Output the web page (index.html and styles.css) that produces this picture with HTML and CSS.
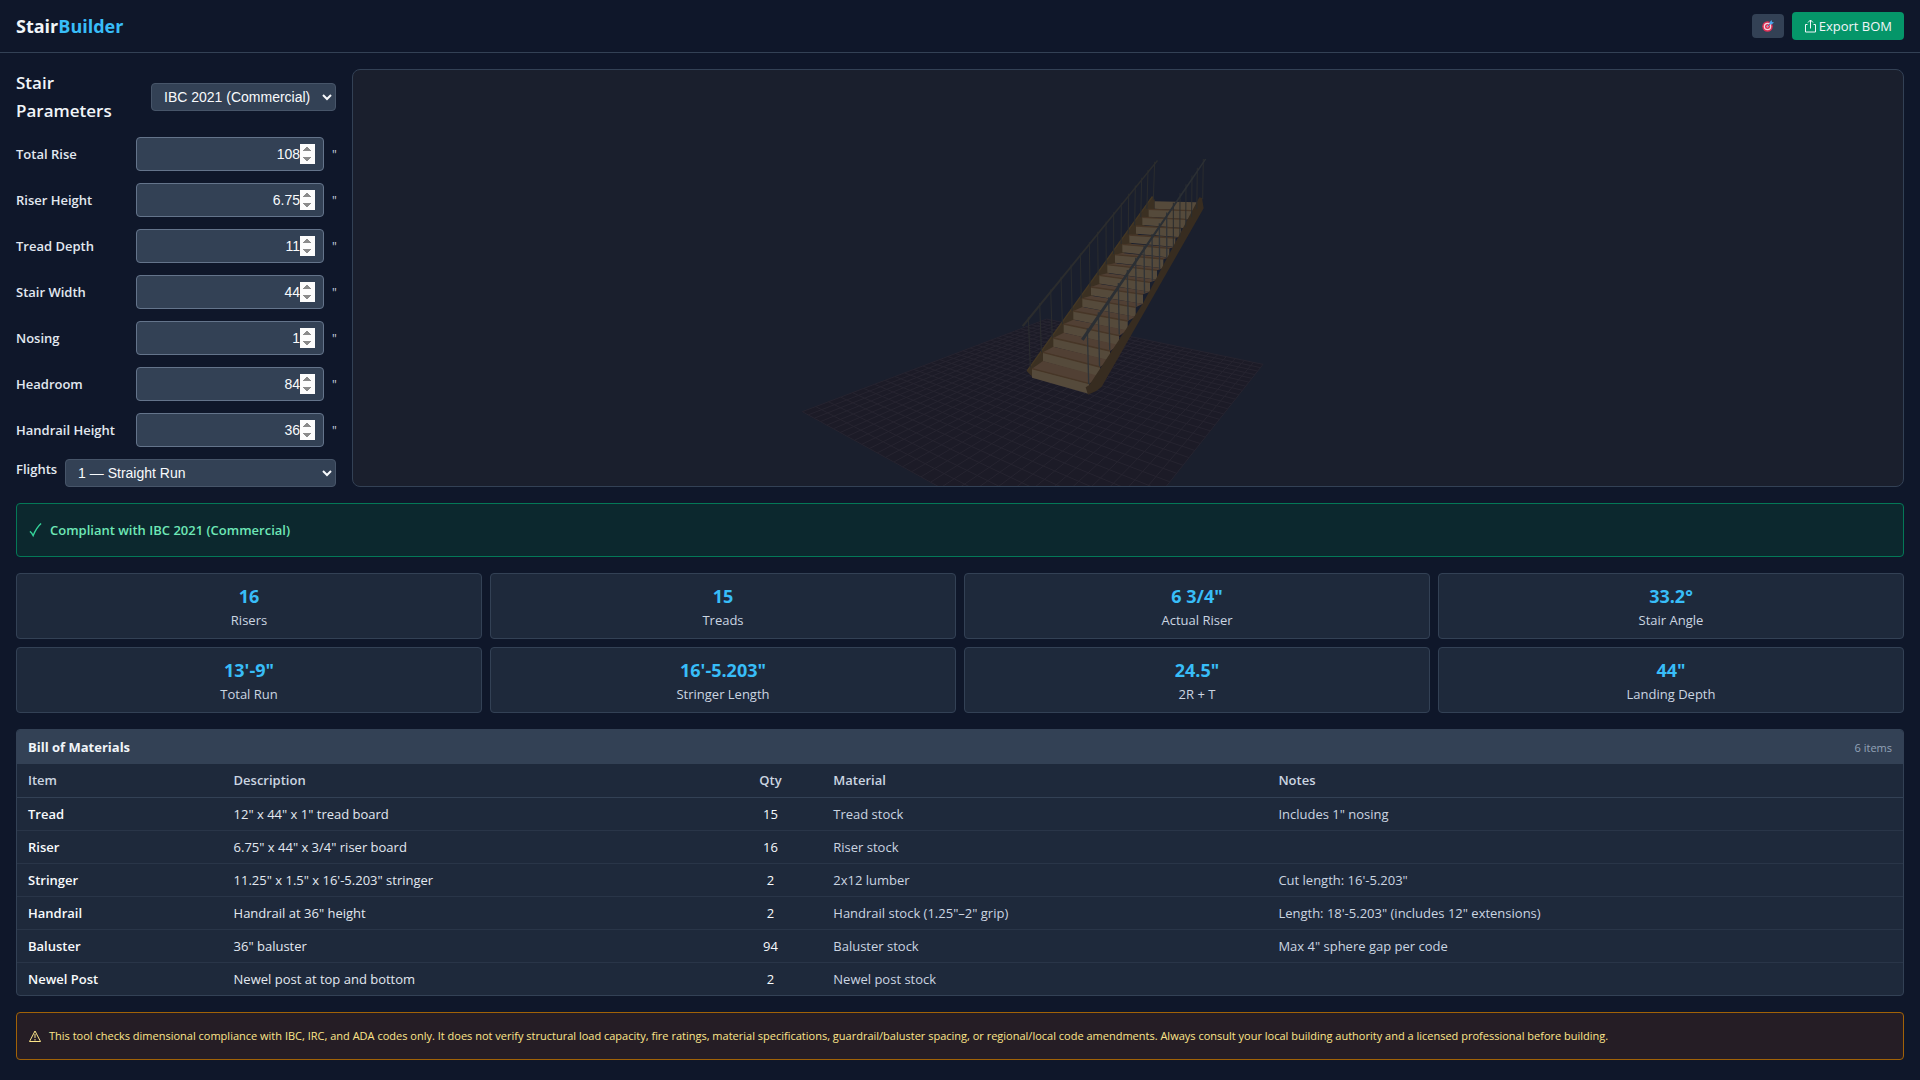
FILE: index.html
```html
<!DOCTYPE html>
<html lang="en">
<head>
  <meta charset="UTF-8" />
  <meta name="viewport" content="width=device-width, initial-scale=1.0" />
  <title>StairBuilder</title>
  <link rel="stylesheet" href="styles.css">
</head>
<body>

  <!-- Header -->
  <header class="header">
    <h1 class="logo">Stair<span>Builder</span></h1>
    <div class="actions">
      <button class="btn-view" type="button" aria-label="Reset view">
        <svg width="12" height="12" viewBox="0 0 24 24">
          <circle cx="11" cy="13" r="10.5" fill="#dd2e54"/>
          <circle cx="11" cy="13" r="7.5" fill="#f3d5de"/>
          <circle cx="11" cy="13" r="5" fill="#dd2e54"/>
          <circle cx="11" cy="13" r="2" fill="#f3d5de"/>
          <path d="M11 13L18 6" stroke="#2b7bbd" stroke-width="2"/>
          <path d="M15 9V5l4-5 1 4 4 1-5 4z" fill="#4aa8ee"/>
        </svg>
      </button>
      <button class="btn-export" type="button">
        <svg width="13" height="14" viewBox="0 0 13 14" fill="none" stroke="currentColor">
          <path d="M3.500 5.500h-2v7.500h10V5.500h-2M6.500 9.500V1M4 3.500L6.500 1 9 3.500"/>
        </svg>Export BOM</button>
    </div>
  </header>

  <main class="main">
    <div class="workspace">

      <!-- Parameters -->
      <form class="params">
        <div class="params-head">
          <h2>Stair Parameters</h2>
          <select aria-label="Building code">
            <option>IBC 2021 (Commercial)</option>
            <option>IRC 2021 (Residential)</option>
            <option>ADA</option>
          </select>
        </div>
        <div class="field">
          <label for="rise">Total Rise</label>
          <input id="rise" type="number" value="108">
          <span class="unit">"</span>
        </div>
        <div class="field">
          <label for="riser">Riser Height</label>
          <input id="riser" type="number" step="0.25" value="6.75">
          <span class="unit">"</span>
        </div>
        <div class="field">
          <label for="tread">Tread Depth</label>
          <input id="tread" type="number" value="11">
          <span class="unit">"</span>
        </div>
        <div class="field">
          <label for="width">Stair Width</label>
          <input id="width" type="number" value="44">
          <span class="unit">"</span>
        </div>
        <div class="field">
          <label for="nosing">Nosing</label>
          <input id="nosing" type="number" value="1">
          <span class="unit">"</span>
        </div>
        <div class="field">
          <label for="headroom">Headroom</label>
          <input id="headroom" type="number" value="84">
          <span class="unit">"</span>
        </div>
        <div class="field">
          <label for="handrail">Handrail Height</label>
          <input id="handrail" type="number" value="36">
          <span class="unit">"</span>
        </div>
        <div class="flights">
          <label for="flights">Flights</label>
          <select id="flights">
            <option>1 — Straight Run</option>
            <option>2 — L-Shape</option>
          </select>
        </div>
      </form>

      <!-- 3D view -->
      <div class="viewer">
        <svg id="scene" viewBox="-1281 -210 4650 1248" role="img" aria-label="Stair preview"></svg>
      </div>
    </div>

    <div class="compliance">
      <svg width="13" height="16" viewBox="0 0 14 16" fill="none" stroke="#34d399" stroke-width="1.500">
        <path d="M1 9.500c1.500 1 2.500 2.500 3.500 4.500C6.500 9 9 4.500 13 1"/>
      </svg>
      <strong>Compliant with IBC 2021 (Commercial)</strong>
    </div>

    <!-- Results -->
    <div class="stats">
      <div class="stat"><b>16</b><span>Risers</span></div>
      <div class="stat"><b>15</b><span>Treads</span></div>
      <div class="stat"><b>6 3/4"</b><span>Actual Riser</span></div>
      <div class="stat"><b>33.2°</b><span>Stair Angle</span></div>
      <div class="stat"><b>13'-9"</b><span>Total Run</span></div>
      <div class="stat"><b>16'-5.203"</b><span>Stringer Length</span></div>
      <div class="stat"><b>24.5"</b><span>2R + T</span></div>
      <div class="stat"><b>44"</b><span>Landing Depth</span></div>
    </div>

    <!-- Bill of Materials -->
    <section class="bom">
      <div class="bom-head">
        <h3>Bill of Materials</h3>
        <span>6 items</span>
      </div>
      <table>
        <thead>
          <tr>
            <th class="col-item">Item</th>
            <th class="col-desc">Description</th>
            <th class="col-qty">Qty</th>
            <th class="col-material">Material</th>
            <th>Notes</th>
          </tr>
        </thead>
        <tbody>
          <tr><td>Tread</td><td>12" x 44" x 1" tread board</td><td>15</td><td>Tread stock</td><td>Includes 1" nosing</td></tr>
          <tr><td>Riser</td><td>6.75" x 44" x 3/4" riser board</td><td>16</td><td>Riser stock</td><td></td></tr>
          <tr><td>Stringer</td><td>11.25" x 1.5" x 16'-5.203" stringer</td><td>2</td><td>2x12 lumber</td><td>Cut length: 16'-5.203"</td></tr>
          <tr><td>Handrail</td><td>Handrail at 36" height</td><td>2</td><td>Handrail stock (1.25"–2" grip)</td><td>Length: 18'-5.203" (includes 12" extensions)</td></tr>
          <tr><td>Baluster</td><td>36" baluster</td><td>94</td><td>Baluster stock</td><td>Max 4" sphere gap per code</td></tr>
          <tr><td>Newel Post</td><td>Newel post at top and bottom</td><td>2</td><td>Newel post stock</td><td></td></tr>
        </tbody>
      </table>
    </section>

    <div class="disclaimer">
      <svg width="12" height="12" viewBox="0 0 12 12" fill="none" stroke="currentColor">
        <path d="M6 1L11.500 11.500H.5zM6 4v4M6 9v1.500"/>
      </svg>
      <p>This tool checks dimensional compliance with IBC, IRC, and ADA codes only. It does not verify structural load capacity, fire ratings, material specifications, guardrail/baluster spacing, or regional/local code amendments. Always consult your local building authority and a licensed professional before building.</p>
    </div>
  </main>

  <script src="scene.js"></script>
</body>
</html>
```
FILE: styles.css
```css
* {
  box-sizing: border-box;
}
body {
  margin: 0;
  background-color: #0f172a;
  color: #f1f5f9;
  font-family: 'Segoe UI', 'Open Sans', sans-serif;
  font-size: 13px;
}
h1, h2, h3, p {
  margin: 0;
}

/* Header */
.header {
  display: flex;
  justify-content: space-between;
  align-items: center;
  padding: 12px 16px;
  border-bottom: 1px solid #334155;
}
.logo {
  font-size: 18px;
  line-height: 28px;
  font-weight: 700;
}
.logo span {
  color: #38bdf8;
}
.actions {
  display: flex;
  align-items: center;
  gap: 8px;
}
.actions button {
  display: flex;
  align-items: center;
  justify-content: center;
  border: none;
  border-radius: 4px;
  cursor: pointer;
}
.btn-view {
  width: 32px;
  height: 24px;
  padding: 0;
  background-color: #334155;
}
.btn-export {
  height: 28px;
  padding: 0 12px;
  gap: 2px;
  background-color: #059669;
  color: #f1f5f9;
  font-family: inherit;
  font-size: 13px;
  font-weight: 500;
}

.main {
  display: flex;
  flex-direction: column;
  gap: 16px;
  padding: 16px;
}
.workspace {
  display: grid;
  grid-template-columns: 320px 1fr;
  gap: 16px;
}

/* Parameters */
.params {
  display: flex;
  flex-direction: column;
  gap: 12px;
}
.params-head {
  display: flex;
  justify-content: space-between;
  align-items: center;
  gap: 12px;
}
.params-head h2 {
  font-size: 17px;
  line-height: 28px;
  font-weight: 600;
}
.params label {
  color: #e2e8f0;
  font-weight: 600;
}
.field {
  display: flex;
  align-items: center;
  gap: 8px;
}
.field label {
  width: 112px;
}
.field input {
  flex: 1;
  min-width: 0;
  height: 34px;
  padding: 6px 8px;
  border: 1px solid #64748b;
  border-radius: 4px;
  background-color: #334155;
  color: #f8fafc;
  font: 14px 'Liberation Sans', sans-serif;
  text-align: right;
}
.field input::-webkit-inner-spin-button {
  opacity: 1;
  height: 20px;
}
.unit {
  width: 4px;
  color: #cbd5e1;
  font-size: 12px;
}
select {
  height: 28px;
  padding: 0 8px;
  border: 1px solid #475569;
  border-radius: 4px;
  background-color: #334155;
  color: #f8fafc;
  font: 14px 'Liberation Sans', sans-serif;
}
.flights {
  display: flex;
  gap: 8px;
}
.flights label {
  line-height: 20px;
}
.flights select {
  flex: 1;
}

.viewer {
  display: flex;
  overflow: hidden;
  border: 1px solid #334155;
  border-radius: 8px;
  background-color: #1a1f2d;
}
.viewer svg {
  flex: 1;
  width: 100%;
  min-height: 0;
}

.compliance {
  display: flex;
  align-items: center;
  gap: 8px;
  height: 54px;
  padding: 0 12px;
  border: 1px solid #047857;
  border-radius: 4px;
  background-color: #0c282e;
  color: #6ee7b7;
}
.compliance strong {
  font-weight: 600;
}

/* Results */
.stats {
  display: grid;
  grid-template-columns: repeat(4, 1fr);
  gap: 8px;
}
.stat {
  display: flex;
  flex-direction: column;
  align-items: center;
  padding: 9px 8px 8px;
  border: 1px solid #334155;
  border-radius: 4px;
  background-color: #1e293b;
}
.stat b {
  color: #38bdf8;
  font-size: 18px;
  line-height: 27px;
}
.stat span {
  color: #cbd5e1;
  line-height: 20px;
}

/* Bill of Materials */
.bom {
  overflow: hidden;
  border: 1px solid #334155;
  border-radius: 4px;
  background-color: #1e293b;
}
.bom-head {
  display: flex;
  justify-content: space-between;
  align-items: center;
  height: 34px;
  padding: 0 11px;
  background-color: #334155;
}
.bom-head h3 {
  font-size: 13px;
  font-weight: 700;
}
.bom-head span {
  color: #94a3b8;
  font-size: 11px;
}
.bom table {
  width: 100%;
  border-collapse: collapse;
  table-layout: fixed;
}
.bom th,
.bom td {
  height: 33px;
  padding: 0 11px;
  text-align: left;
  color: #cbd5e1;
  border-bottom: 1px solid #293548;
}
.bom th {
  font-weight: 600;
  border-bottom-color: #334155;
}
.bom tr:last-child td {
  border-bottom: none;
}
.bom td:first-child {
  color: #f8fafc;
  font-weight: 600;
}
.bom td:nth-child(2) {
  color: #e2e8f0;
}
.bom th:nth-child(3),
.bom td:nth-child(3) {
  text-align: center;
}
.bom td:nth-child(3) {
  color: #f8fafc;
}
.bom .col-item { width: 10.9%; }
.bom .col-desc { width: 26.3%; }
.bom .col-qty { width: 5.5%; }
.bom .col-material { width: 23.6%; }

.disclaimer {
  display: flex;
  align-items: center;
  gap: 8px;
  height: 48px;
  padding: 0 12px;
  border: 1px solid #a16207;
  border-radius: 4px;
  background-color: #251d25;
  color: #fde68a;
}
.disclaimer p {
  font-size: 11px;
  line-height: 20px;
}

/* Scene */
.ground { fill: #1c1b27; }
.grid { fill: none; stroke: #262430; stroke-width: 3; }
.riser { fill: #554a3b; }
.tread { fill: #514034; }
.nose { stroke: #473627; stroke-width: 4; }
.stringer-in { fill: #3b3022; }
.stringer-out { fill: #372c20; }
.stringer-edge { stroke: #443723; stroke-width: 4; }
.rail { fill: #2b2c2d; }
.rail-near { fill: #2b2f34; }
.baluster { stroke: #2a2c2e; stroke-width: 3; }
.baluster-near { stroke: #303438; stroke-width: 4; }
```
FILE: scene.js
```js
const scene = document.getElementById('scene');

function add(tag, cls, attrs) {
  const el = document.createElementNS('http://www.w3.org/2000/svg', tag);
  el.setAttribute('class', cls);
  for (const key in attrs) el.setAttribute(key, attrs[key]);
  scene.appendChild(el);
}

function poly(cls, points) {
  add('polygon', cls, { points: points.map(p => p.join(',')).join(' ') });
}

function line(cls, a, b) {
  add('line', cls, { x1: a[0], y1: a[1], x2: b[0], y2: b[1] });
}

// Ground plane: left, back, right, front corners
const ground = [[67, 815], [800, 537], [1449, 673], [951, 1301]];

// Maps a point of the unit square onto the ground plane
function project(u, v) {
  const [a, b, c, d] = ground;
  const sx = a[0] - b[0] + c[0] - d[0];
  const sy = a[1] - b[1] + c[1] - d[1];
  const dx1 = b[0] - c[0], dx2 = d[0] - c[0];
  const dy1 = b[1] - c[1], dy2 = d[1] - c[1];
  const det = dx1 * dy2 - dx2 * dy1;
  const g = (sx * dy2 - dx2 * sy) / det;
  const h = (dx1 * sy - sx * dy1) / det;
  const w = g * u + h * v + 1;
  return [
    ((b[0] - a[0] + g * b[0]) * u + (d[0] - a[0] + h * d[0]) * v + a[0]) / w,
    ((b[1] - a[1] + g * b[1]) * u + (d[1] - a[1] + h * d[1]) * v + a[1]) / w
  ];
}

poly('ground', ground);
const cells = 30;
for (let i = 0; i <= cells; i++) {
  line('grid', project(i / cells, 0), project(i / cells, 1));
  line('grid', project(0, i / cells), project(1, i / cells));
}

// Front corners of each step, bottom to top
const left = [[756, 686], [789, 637], [820, 594], [851, 552], [880, 513], [907, 475], [933, 441], [958, 406],
  [982, 374], [1005, 344], [1027, 313], [1048, 285], [1068, 258], [1087, 232], [1106, 208], [1124, 184]];
const right = [[928, 731], [960, 681], [990, 633], [1017, 587], [1043, 543], [1067, 502], [1089, 463], [1110, 427],
  [1131, 391], [1150, 357], [1168, 325], [1186, 294], [1203, 265], [1219, 238], [1235, 212], [1250, 187]];

// Far stringer, handrail and balusters
poly('stringer-in', [[740, 693], [1117, 168], [1124, 180], [1124, 215], [758, 712]]);
line('stringer-edge', [742, 692], [1117, 170]);
const farX = [745, 779, 812, 843, 873, 901, 928, 953, 978, 1001, 1024, 1046, 1066, 1085, 1104, 1124];
farX.forEach((x, i) => {
  const foot = x + 6 - i * 10 / 15;
  line('baluster', [x, 548 - (x - 731) * 1.228], [foot, 682 - (foot - 751) * 1.36]);
});
poly('rail', [[725, 557], [1131, 60], [1134, 63], [731, 560]]);

// Steps
for (let i = 15; i >= 0; i--) {
  const l = left[i], r = right[i];
  if (i < 15) {
    const nl = left[i + 1], nr = right[i + 1];
    poly('tread', [l, r, [nr[0], nr[1] + 28], [nl[0], nl[1] + 26]]);
  }
  const drop = 22 + (15 - i) / 3;
  poly('riser', [l, r, [r[0], r[1] + drop + 4], [l[0], l[1] + drop]]);
  if (i < 15) line('nose', l, r);
}

// Near stringer, handrail and balusters
poly('stringer-out', [[917, 742], [928, 735], [1089, 490], [1258, 172], [1266, 174], [1271, 205], [965, 740], [950, 752], [924, 764]]);
const nearX = [922, 955, 986, 1015, 1042, 1067, 1092, 1116, 1138, 1160, 1180, 1200, 1218, 1236, 1252, 1270];
nearX.forEach((x, i) => {
  const foot = x + 4 - i * 6 / 15;
  line(i < 10 ? 'baluster-near' : 'baluster', [x, 565 - (x - 922) * 1.46], [foot, 732 - (foot - 926) * 1.62]);
});
poly('rail-near', [[903, 597], [1275, 56], [1279, 58], [911, 602]]);
```
